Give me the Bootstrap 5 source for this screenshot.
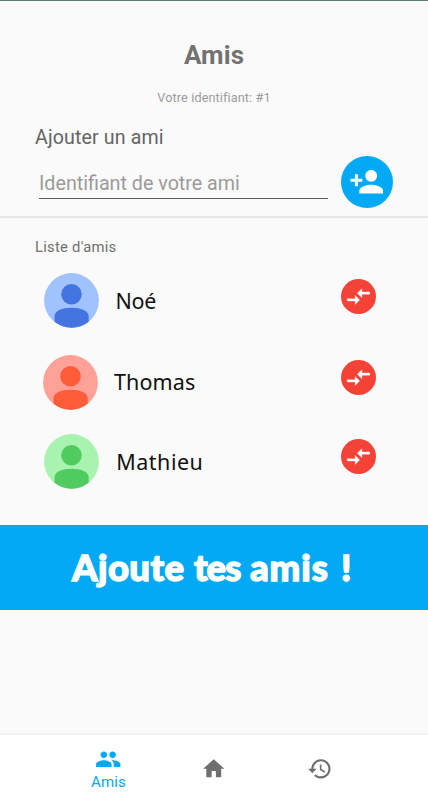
<!DOCTYPE html>
<html lang="fr">
<head>
<meta charset="utf-8">
<meta name="viewport" content="width=device-width, initial-scale=1">
<title>Amis</title>
<link href="https://cdn.jsdelivr.net/npm/bootstrap@5.3.0/dist/css/bootstrap.min.css" rel="stylesheet">
<style>
body{font-family:Roboto,"Liberation Sans",sans-serif;background:#fafafa;color:#6b6b6b}
svg{display:block;flex:none}
.screen{height:800px;border-top:1px solid #5f7d76;overflow:hidden}
.title{font-size:26px;line-height:30px;font-weight:700;margin-top:39px;color:#727272;letter-spacing:.1px}
.ident{font-size:12.7px;line-height:16px;margin-top:20px;color:#9c9c9c;letter-spacing:.1px}
.add-block{height:112px;border-bottom:2px solid #e8e8e8;padding:20px 35px 0}
.add-label{font-size:19.6px;line-height:24px;color:#646464;letter-spacing:.13px}
.add-row{height:52px;margin-top:5px}
.add-row .form-control{width:289px;height:31px;margin:13px 13px 0 4px;border:0;border-bottom:1px solid #5c5c5c;border-radius:0;background:none;padding:0;font-size:19.7px;line-height:30px;letter-spacing:0;box-shadow:none}
.add-row .form-control::placeholder{color:#9a9a9a;opacity:1}
.add-btn{width:52px;height:52px;background:#03a9f4;color:#fff;padding:0;margin-top:1px}
.list-label{font-size:14.8px;line-height:18px;padding:20px 0 0 35px;color:#707070;letter-spacing:.25px}
.friends{height:269px;padding-top:17px}
.friend{height:55px;padding-left:43.5px;margin-bottom:26.5px}
.friend:nth-child(2){padding-left:43px;margin-bottom:24px}
.friend:nth-child(3){padding-left:44.3px}
.friend-name{font:21.5px/30px "Noto Sans",sans-serif;color:#111;width:225px;margin-left:17px;padding-top:1px;letter-spacing:-.3px}
.friend:nth-child(2) .friend-name{width:227px;margin-left:16px;padding:0 0 1px;letter-spacing:.1px}
.friend:nth-child(3) .friend-name{padding-top:1px;letter-spacing:.5px}
.swap{width:35px;height:35px;background:#f44336;color:#fff;padding:0;margin:-9px 0 0}
.banner{height:85px;background:#03a9f4;color:#fff;font:900 36.5px/85px Lato,sans-serif;-webkit-text-stroke:1.3px #fff;padding:0 0 0 72px}
.banner span{display:block;flex:none;line-height:85px;letter-spacing:.4px}
.w-first{width:122px}.w-mid{width:56px}.w-last{width:91px}
.banner .w-mid{letter-spacing:-1px}
.banner .w-last{letter-spacing:.9px}
.tabs{height:67px;background:#fff;border-top:2px solid #f2f2f2;padding:0 55px;color:#6f6f6f}
.tab{width:106px;height:67px}
.tab-label{font-size:15px;line-height:17px;color:#03a9f4;margin-top:1px;letter-spacing:.2px;padding-left:1px}
</style>
</head>
<body>
<svg width="0" height="0" class="d-none" aria-hidden="true">
<defs>
<symbol id="swap" viewBox="0 0 24 24"><path fill="currentColor" stroke="currentColor" stroke-width=".3" d="M9.01 14H2v2h7.01v3L13 15l-3.99-4v3zm5.98-1v-3H22V8h-7.01V5L11 9l3.99 4z"/></symbol>
<symbol id="person" viewBox="0 0 55 55"><circle cx="27.5" cy="21.3" r="10.3"/><path d="M10.5 48.8V43.5C10.5 37.5 18 34.7 27.5 34.7S44.7 37.5 44.7 43.5V48.8A27.5 27.5 0 0 1 10.5 48.8Z"/></symbol>
</defs>
</svg>
<div class="screen d-flex flex-column">
  <h1 class="title text-center mb-0">Amis</h1>
  <p class="ident text-center mb-0">Votre identifiant: #1</p>
  <section class="add-block">
    <div class="add-label">Ajouter un ami</div>
    <div class="add-row d-flex align-items-start">
      <input class="form-control" type="text" placeholder="Identifiant de votre ami">
      <button class="btn add-btn rounded-circle border-0 d-flex justify-content-center align-items-center flex-shrink-0" aria-label="Ajouter">
        <svg width="35.5" height="35.5" viewBox="0 0 24 24"><path fill="currentColor" d="M15 12c2.21 0 4-1.79 4-4s-1.79-4-4-4-4 1.79-4 4 1.79 4 4 4zm-9-2V7H4v3H1v2h3v3h2v-3h3v-2H6zm9 4c-2.67 0-8 1.34-8 4v2h16v-2c0-2.66-5.33-4-8-4z"/></svg>
      </button>
    </div>
  </section>
  <div class="list-label">Liste d'amis</div>
  <div class="friends">
    <div class="friend d-flex align-items-center">
      <svg width="55" height="55" viewBox="0 0 55 55"><circle cx="27.5" cy="27.5" r="27.4" fill="#a0c3ff"/><use href="#person" fill="#4374e0"/></svg>
      <span class="friend-name">Noé</span>
      <button class="btn swap rounded-circle border-0 d-flex justify-content-center align-items-center flex-shrink-0" aria-label="Échanger"><svg width="27" height="27"><use href="#swap"/></svg></button>
    </div>
    <div class="friend d-flex align-items-center">
      <svg width="55" height="55" viewBox="0 0 55 55"><circle cx="27.5" cy="27.5" r="27.4" fill="#ffa199"/><use href="#person" fill="#ff5c39"/></svg>
      <span class="friend-name">Thomas</span>
      <button class="btn swap rounded-circle border-0 d-flex justify-content-center align-items-center flex-shrink-0" aria-label="Échanger"><svg width="27" height="27"><use href="#swap"/></svg></button>
    </div>
    <div class="friend d-flex align-items-center">
      <svg width="55" height="55" viewBox="0 0 55 55"><circle cx="27.5" cy="27.5" r="27.4" fill="#a8f3af"/><use href="#person" fill="#50cb60"/></svg>
      <span class="friend-name">Mathieu</span>
      <button class="btn swap rounded-circle border-0 d-flex justify-content-center align-items-center flex-shrink-0" aria-label="Échanger"><svg width="27" height="27"><use href="#swap"/></svg></button>
    </div>
  </div>
  <div class="banner d-flex"><span class="w-first">Ajoute </span><span class="w-mid">tes </span><span class="w-last">amis </span><span>!</span></div>
  <nav class="tabs d-flex mt-auto">
    <div class="tab d-flex flex-column align-items-center justify-content-center">
      <svg width="26.5" height="26.5" viewBox="0 0 24 24"><path fill="#03a9f4" d="M16 11c1.66 0 2.99-1.34 2.99-3S17.66 5 16 5c-1.66 0-3 1.34-3 3s1.34 3 3 3zm-8 0c1.66 0 2.99-1.34 2.99-3S9.66 5 8 5C6.34 5 5 6.34 5 8s1.34 3 3 3zm0 2c-2.33 0-7 1.17-7 3.5V19h14v-2.5c0-2.33-4.67-3.5-7-3.5zm8 0c-.29 0-.62.02-.97.05 1.16.84 1.97 1.97 1.97 3.45V19h6v-2.5c0-2.33-4.67-3.5-7-3.5z"/></svg>
      <span class="tab-label">Amis</span>
    </div>
    <div class="tab d-flex align-items-center justify-content-center">
      <svg width="25.5" height="25.5" viewBox="0 0 24 24"><path fill="currentColor" d="M10 20v-6h4v6h5v-8h3L12 3 2 12h3v8z"/></svg>
    </div>
    <div class="tab d-flex align-items-center justify-content-center">
      <svg width="25.7" height="25.7" viewBox="0 0 24 24"><path fill="currentColor" d="M13 3c-4.97 0-9 4.03-9 9H1l3.89 3.89.07.14L9 12H6c0-3.87 3.13-7 7-7s7 3.13 7 7-3.13 7-7 7c-1.93 0-3.68-.79-4.94-2.06l-1.42 1.42C8.27 19.99 10.51 21 13 21c4.97 0 9-4.03 9-9s-4.03-9-9-9zm-1 5v5l4.28 2.54.72-1.21-3.5-2.08V8H12z"/></svg>
    </div>
  </nav>
</div>
<script src="https://cdn.jsdelivr.net/npm/bootstrap@5.3.0/dist/js/bootstrap.bundle.min.js"></script>
</body>
</html>
